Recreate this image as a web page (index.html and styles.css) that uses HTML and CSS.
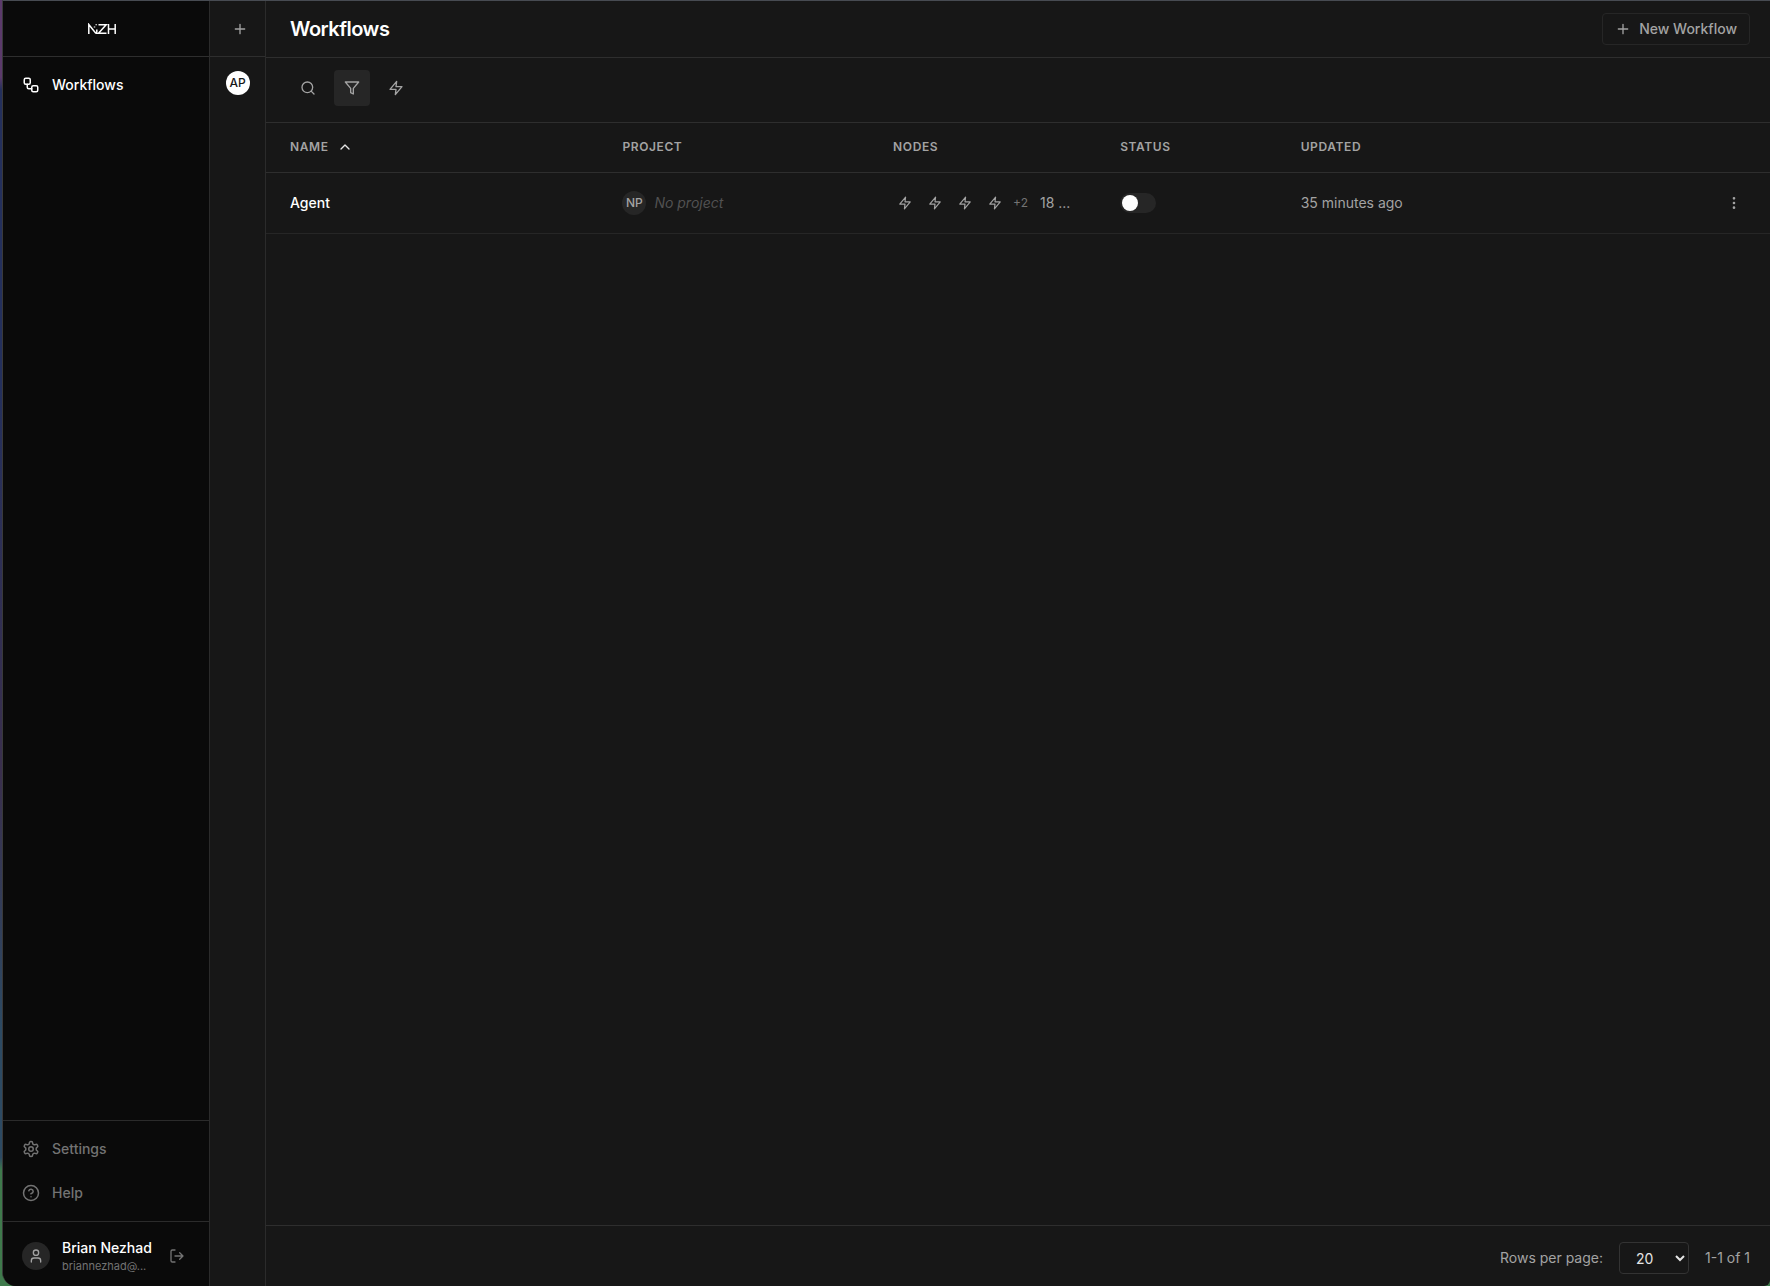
FILE: index.html
```html
<!DOCTYPE html>
<html lang="en">
  <head>
    <meta charset="UTF-8" />
    <meta name="viewport" content="width=device-width, initial-scale=1.0" />
    <title>Workflows</title>
    <link rel="stylesheet" href="styles.css">
  </head>
  <body>
    <!-- shared icons -->
    <svg class="sprite" aria-hidden="true">
      <symbol id="i-plus" viewBox="0 0 24 24"><path d="M5 12h14M12 5v14" /></symbol>
      <symbol id="i-zap" viewBox="0 0 24 24"><path d="M13 2 3 14h9l-1 8 10-12h-9l1-8z" /></symbol>
    </svg>

    <div class="window">
      <aside class="sidebar">
        <div class="sidebar-header">
          <a href="#" class="logo" aria-label="NZH">
            <svg width="28" height="12" viewBox="0 0 28 12">
              <path d="M.8 11V1.500L8 10.500M8.800 6.500v4.500M8.200 1.200v1M6.500 3.500v1M10.500 1.800h7.700l-7.700 8.500h8M20.500 1v10M27.200 1v10M20.500 6h6.700" />
            </svg>
          </a>
        </div>
        <nav class="nav">
          <a href="#" class="nav-item active">
            <svg class="icon" width="18" height="18" viewBox="0 0 24 24">
              <rect width="8" height="8" x="3" y="3" rx="2" />
              <path d="M7 11v4a2 2 0 0 0 2 2h4" />
              <rect width="8" height="8" x="13" y="13" rx="2" />
            </svg>
            Workflows
          </a>
        </nav>
        <nav class="nav nav-bottom">
          <a href="#" class="nav-item">
            <svg class="icon" width="18" height="18" viewBox="0 0 24 24">
              <path d="M12.220 2h-.44a2 2 0 0 0-2 2v.18a2 2 0 0 1-1 1.730l-.43.25a2 2 0 0 1-2 0l-.15-.08a2 2 0 0 0-2.730.73l-.22.38a2 2 0 0 0 .73 2.730l.15.1a2 2 0 0 1 1 1.720v.51a2 2 0 0 1-1 1.740l-.15.09a2 2 0 0 0-.73 2.730l.22.38a2 2 0 0 0 2.730.73l.15-.08a2 2 0 0 1 2 0l.43.25a2 2 0 0 1 1 1.730V20a2 2 0 0 0 2 2h.44a2 2 0 0 0 2-2v-.18a2 2 0 0 1 1-1.730l.43-.25a2 2 0 0 1 2 0l.15.08a2 2 0 0 0 2.730-.73l.22-.39a2 2 0 0 0-.73-2.730l-.15-.08a2 2 0 0 1-1-1.740v-.5a2 2 0 0 1 1-1.740l.15-.09a2 2 0 0 0 .73-2.730l-.22-.38a2 2 0 0 0-2.730-.73l-.15.08a2 2 0 0 1-2 0l-.43-.25a2 2 0 0 1-1-1.730V4a2 2 0 0 0-2-2z" />
              <circle cx="12" cy="12" r="3" />
            </svg>
            Settings
          </a>
          <a href="#" class="nav-item">
            <svg class="icon" width="18" height="18" viewBox="0 0 24 24">
              <circle cx="12" cy="12" r="10" />
              <path d="M9.090 9a3 3 0 0 1 5.830 1c0 2-3 3-3 3M12 17h.01" />
            </svg>
            Help
          </a>
        </nav>
        <div class="user">
          <span class="user-avatar">
            <svg class="icon" width="16" height="16" viewBox="0 0 24 24">
              <path d="M19 21v-2a4 4 0 0 0-4-4H9a4 4 0 0 0-4 4v2" />
              <circle cx="12" cy="7" r="4" />
            </svg>
          </span>
          <div class="user-info">
            <div class="user-name">Brian Nezhad</div>
            <div class="user-email">briannezhad@...</div>
          </div>
          <button type="button" class="icon-btn logout" aria-label="Log out">
            <svg class="icon" width="16" height="16" viewBox="0 0 24 24">
              <path d="M9 21H5a2 2 0 0 1-2-2V5a2 2 0 0 1 2-2h4M16 17l5-5-5-5M21 12H9" />
            </svg>
          </button>
        </div>
      </aside>

      <aside class="rail">
        <div class="rail-header">
          <button type="button" class="icon-btn" aria-label="New project">
            <svg class="icon" width="16" height="16"><use href="#i-plus" /></svg>
          </button>
        </div>
        <div class="rail-list">
          <a href="#" class="avatar avatar-light">AP</a>
        </div>
      </aside>

      <main class="main">
        <header class="page-header">
          <h1>Workflows</h1>
          <button type="button" class="btn">
            <svg class="icon" width="16" height="16"><use href="#i-plus" /></svg>
            New Workflow
          </button>
        </header>

        <div class="toolbar">
          <button type="button" class="icon-btn tool" aria-label="Search">
            <svg class="icon" width="16" height="16" viewBox="0 0 24 24">
              <circle cx="11" cy="11" r="8" />
              <path d="m21 21-4.300-4.300" />
            </svg>
          </button>
          <button type="button" class="icon-btn tool selected" aria-label="Filter">
            <svg class="icon" width="16" height="16" viewBox="0 0 24 24">
              <path d="M22 3H2l8 9.460V19l4 2v-8.540L22 3z" />
            </svg>
          </button>
          <button type="button" class="icon-btn tool" aria-label="Active only">
            <svg class="icon" width="16" height="16"><use href="#i-zap" /></svg>
          </button>
        </div>

        <table class="workflows">
          <thead>
            <tr>
              <th class="col-name" aria-sort="ascending">
                <button type="button" class="sort">
                  Name
                  <svg class="icon" width="16" height="16" viewBox="0 0 24 24"><path d="m18 15-6-6-6 6" /></svg>
                </button>
              </th>
              <th class="col-project">Project</th>
              <th class="col-nodes">Nodes</th>
              <th class="col-status">Status</th>
              <th class="col-updated">Updated</th>
              <th class="col-actions"></th>
            </tr>
          </thead>
          <tbody>
            <tr>
              <td><a href="#" class="workflow-name">Agent</a></td>
              <td>
                <div class="project">
                  <span class="avatar">NP</span>
                  <em>No project</em>
                </div>
              </td>
              <td>
                <div class="nodes">
                  <span class="node"><svg class="icon" width="14" height="14"><use href="#i-zap" /></svg></span>
                  <span class="node"><svg class="icon" width="14" height="14"><use href="#i-zap" /></svg></span>
                  <span class="node"><svg class="icon" width="14" height="14"><use href="#i-zap" /></svg></span>
                  <span class="node"><svg class="icon" width="14" height="14"><use href="#i-zap" /></svg></span>
                  <span class="more">+2</span>
                  <span class="count">18 ...</span>
                </div>
              </td>
              <td><input type="checkbox" role="switch" class="switch" aria-label="Agent active" /></td>
              <td>35 minutes ago</td>
              <td class="actions">
                <button type="button" class="icon-btn" aria-label="More actions">
                  <svg class="icon" width="16" height="16" viewBox="0 0 24 24">
                    <circle cx="12" cy="5" r="1" />
                    <circle cx="12" cy="12" r="1" />
                    <circle cx="12" cy="19" r="1" />
                  </svg>
                </button>
              </td>
            </tr>
          </tbody>
        </table>

        <footer class="pager">
          <label for="rows">Rows per page:</label>
          <select id="rows">
            <option>10</option>
            <option selected>20</option>
            <option>50</option>
          </select>
          <span>1-1 of 1</span>
        </footer>
      </main>
    </div>
  </body>
</html>
```
FILE: styles.css
```css
* {
  box-sizing: border-box;
}
body {
  margin: 0;
  background: linear-gradient(#5b3a6b, #5b3a6b 6%, #24305c 7%, #24305c 30%, #3a2f4d 60%, #2d4a63 80%, #2d4a63 90%, #3f7a4c 91%);
  color: #a3a3a3;
  font-family: Inter, "Liberation Sans", sans-serif;
  font-size: 14px;
  line-height: 20px;
}
a {
  color: inherit;
  text-decoration: none;
}
button,
select {
  font: inherit;
  color: inherit;
  cursor: pointer;
}
.sprite {
  display: none;
}
.icon {
  flex-shrink: 0;
  fill: none;
  stroke: currentColor;
  stroke-width: 2;
  stroke-linecap: round;
  stroke-linejoin: round;
}
.window {
  display: flex;
  min-height: 100vh;
  margin-left: 2px;
  background-color: #171717;
  border-top: 1px solid #474b52;
  border-left: 1px solid #3a3a3a;
  border-radius: 0 0 6px 14px;
  overflow: hidden;
}

/* sidebar */
.sidebar {
  display: flex;
  flex-direction: column;
  width: 207px;
  background-color: #0a0a0a;
  border-right: 1px solid #2b2b2b;
}
.sidebar-header,
.rail-header {
  display: flex;
  align-items: center;
  justify-content: center;
  height: 56px;
  border-bottom: 1px solid #2e2e2e;
}
.sidebar-header {
  padding-right: 8px;
}
.logo svg {
  display: block;
  fill: none;
  stroke: #fff;
  stroke-width: 1.5;
}
.nav {
  display: flex;
  flex-direction: column;
  gap: 4px;
  padding: 8px;
}
.nav-bottom {
  margin-top: auto;
  border-top: 1px solid #2b2b2b;
}
.nav-item {
  display: flex;
  align-items: center;
  gap: 12px;
  height: 40px;
  padding: 0 11px;
  color: #737373;
  font-weight: 500;
}
.nav-item.active {
  color: #fff;
}
.user {
  display: flex;
  align-items: center;
  height: 65px;
  padding: 4px 24px 0 19px;
  border-top: 1px solid #2b2b2b;
}
.user-avatar {
  display: flex;
  align-items: center;
  justify-content: center;
  width: 28px;
  height: 28px;
  border-radius: 50%;
  background-color: #262626;
}
.user-info {
  flex: 1;
  margin-left: 12px;
}
.user-name {
  color: #fff;
  font-weight: 500;
}
.user-email {
  color: #737373;
  font-size: 11px;
  line-height: 16px;
}
.icon-btn {
  display: flex;
  align-items: center;
  justify-content: center;
  padding: 0;
  border: none;
  border-radius: 4px;
  background: none;
}
.logout {
  color: #737373;
}

/* project rail */
.rail {
  width: 56px;
  border-right: 1px solid #2b2b2b;
}
.rail-header {
  padding-left: 4px;
}
.rail-list {
  display: flex;
  flex-direction: column;
  align-items: center;
  padding: 14px 0;
}
.avatar {
  display: flex;
  align-items: center;
  justify-content: center;
  width: 24px;
  height: 24px;
  border-radius: 50%;
  background-color: #262626;
  color: #a3a3a3;
  font-size: 12px;
  font-weight: 500;
}
.avatar-light {
  background-color: #fff;
  color: #171717;
}

/* main */
.main {
  display: flex;
  flex: 1;
  flex-direction: column;
}
.page-header {
  display: flex;
  align-items: center;
  justify-content: space-between;
  height: 57px;
  padding: 0 20px 0 24px;
  border-bottom: 1px solid #2e2e2e;
}
h1 {
  margin: 0;
  color: #fff;
  font-size: 20px;
  font-weight: 600;
  letter-spacing: -0.025em;
  line-height: 28px;
}
.btn {
  display: flex;
  align-items: center;
  gap: 8px;
  height: 32px;
  padding: 0 12px;
  border: 1px solid #262626;
  border-radius: 4px;
  background: none;
  font-weight: 500;
}
.toolbar {
  display: flex;
  gap: 8px;
  height: 65px;
  padding: 12px 24px;
  border-bottom: 1px solid #2e2e2e;
}
.tool {
  width: 36px;
  height: 36px;
}
.tool.selected {
  background-color: #262626;
}
.workflows {
  width: 100%;
  table-layout: fixed;
  border-collapse: separate;
  border-spacing: 0;
}
.workflows th {
  height: 50px;
  padding: 0 24px 2px;
  border-bottom: 1px solid #2e2e2e;
  font-size: 12px;
  font-weight: 600;
  letter-spacing: 0.05em;
  line-height: 16px;
  text-align: left;
  text-transform: uppercase;
}
.workflows td {
  height: 61px;
  padding: 0 24px;
  border-bottom: 1px solid #262626;
}
.col-name {
  width: 22.1%;
}
.col-project {
  width: 18%;
}
.col-nodes {
  width: 15.1%;
}
.col-status {
  width: 12%;
}
.col-updated {
  width: 12%;
}
.sort {
  display: flex;
  align-items: center;
  gap: 8px;
  padding: 0;
  border: none;
  background: none;
  letter-spacing: inherit;
  text-transform: inherit;
}
.sort .icon {
  color: #e5e5e5;
}
.workflow-name {
  color: #fff;
  font-weight: 500;
}
.project {
  display: flex;
  align-items: center;
  gap: 8px;
}
.project em {
  color: #525252;
}
.nodes {
  display: flex;
  align-items: center;
  gap: 6px;
}
.node {
  display: flex;
  align-items: center;
  justify-content: center;
  width: 24px;
  height: 24px;
}
.more {
  color: #737373;
  font-size: 12px;
}
.count {
  margin-left: 6px;
  white-space: nowrap;
}
.switch {
  display: flex;
  align-items: center;
  width: 36px;
  height: 20px;
  margin: 0;
  padding: 0 2px;
  border-radius: 10px;
  background-color: #262626;
  appearance: none;
  cursor: pointer;
}
.switch::before {
  width: 16px;
  height: 16px;
  border-radius: 50%;
  background-color: #fff;
  content: "";
}
.switch:checked {
  justify-content: flex-end;
  background-color: #525252;
}
.actions .icon-btn {
  width: 24px;
  height: 24px;
  margin-left: auto;
}
.pager {
  display: flex;
  align-items: center;
  justify-content: flex-end;
  gap: 16px;
  height: 61px;
  margin-top: auto;
  padding: 4px 20px 0;
  border-top: 1px solid #2e2e2e;
}
.pager select {
  width: 70px;
  height: 32px;
  padding: 0 0 0 12px;
  border: 1px solid #333;
  border-radius: 4px;
  background-color: #171717;
  color: #e5e5e5;
}
```
